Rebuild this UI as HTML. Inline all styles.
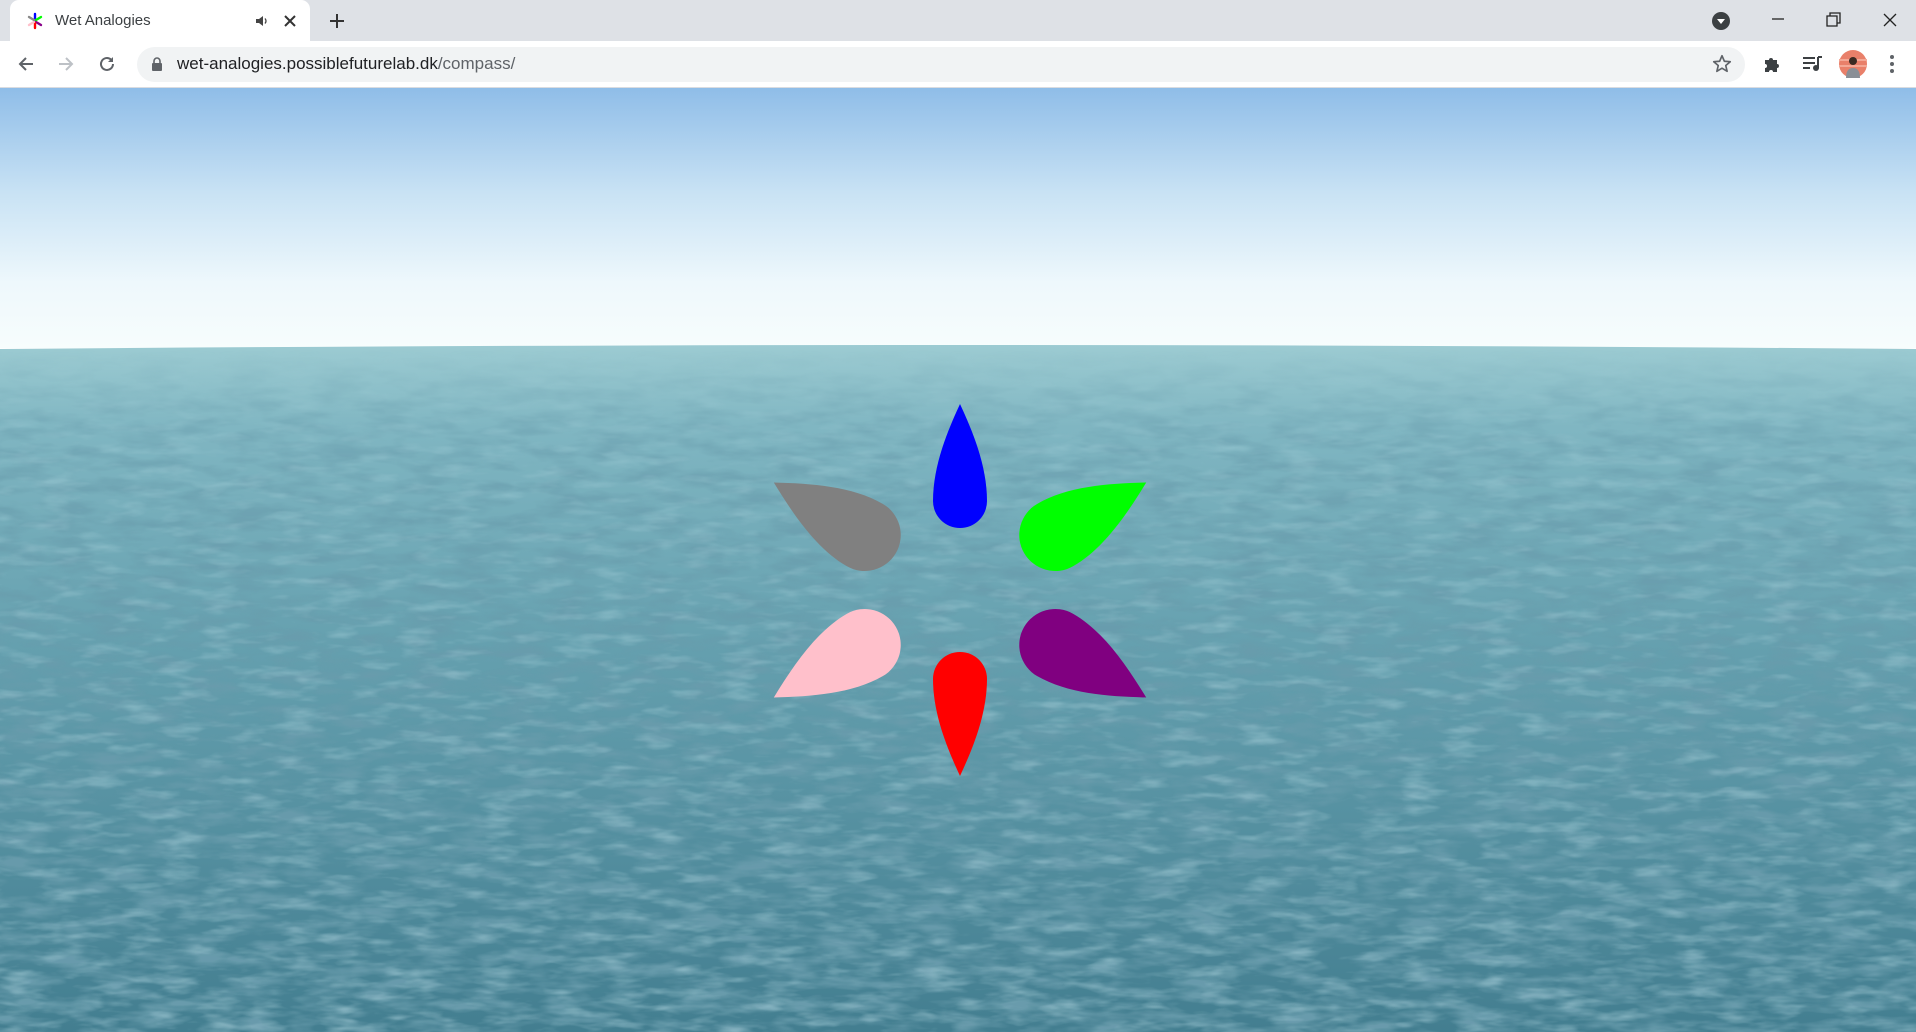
<!DOCTYPE html>
<html><head><meta charset="utf-8"><style>
html,body{margin:0;padding:0;width:1916px;height:1032px;overflow:hidden;font-family:"Liberation Sans",sans-serif;background:#fff}
.tabbar{position:absolute;left:0;top:0;width:1916px;height:41px;background:#dee1e6}
.tab{position:absolute;left:10px;top:0;width:300px;height:41px;background:#fff;border-radius:9px 9px 0 0}
.toolbar{position:absolute;left:0;top:41px;width:1916px;height:46px;background:#fff;border-bottom:1px solid #dadce0}
.omni{position:absolute;left:137px;top:47px;width:1608px;height:35px;background:#f1f3f4;border-radius:18px}
.t{position:absolute;white-space:nowrap}
</style></head><body>
<div class="tabbar"></div>
<div class="tab"></div>
<svg class="t" style="left:26px;top:12px" width="18" height="18" viewBox="0 0 18 18">
<g stroke-width="2.4" stroke-linecap="round"><line x1="9" y1="8" x2="9" y2="2" stroke="#00f"/><line x1="10" y1="8" x2="15" y2="5" stroke="#0f0"/><line x1="10" y1="10" x2="15" y2="13" stroke="#808"/><line x1="9" y1="11" x2="9" y2="16" stroke="#f00"/><line x1="8" y1="10" x2="3" y2="13" stroke="pink"/><line x1="8" y1="8" x2="3" y2="5" stroke="#888"/></g></svg>
<div class="t" style="left:55px;top:12px;font-size:15px;color:#3c4043">Wet Analogies</div>
<svg class="t" style="left:255px;top:14px" width="14" height="14" viewBox="0 0 14 14"><path d="M1 5h3l4-3v10l-4-3H1z" fill="#444"/><path d="M10 4.5q2 2.5 0 5" stroke="#444" fill="none" stroke-width="1.3"/></svg>
<svg class="t" style="left:283px;top:14px" width="14" height="14" viewBox="0 0 14 14"><path d="M2 2L12 12M12 2L2 12" stroke="#333" stroke-width="2"/></svg>
<svg class="t" style="left:328px;top:12px" width="18" height="18" viewBox="0 0 18 18"><path d="M9 2v14M2 9h14" stroke="#333" stroke-width="2"/></svg>
<svg class="t" style="left:1711px;top:11px" width="20" height="20" viewBox="0 0 20 20"><circle cx="10" cy="10" r="9" fill="#3c4043"/><path d="M6 8h8l-4 5z" fill="#fff"/></svg>
<svg class="t" style="left:1770px;top:10px" width="140" height="20" viewBox="0 0 140 20"><path d="M2 9h12" stroke="#222" stroke-width="1.3"/><path d="M57 6h10v10H57zM60 6V3h10v10h-3" stroke="#222" stroke-width="1.3" fill="none"/><path d="M114 4l12 12M126 4L114 16" stroke="#222" stroke-width="1.3"/></svg>
<div class="toolbar"></div>
<div class="omni"></div>
<svg class="t" style="left:16px;top:54px" width="20" height="20" viewBox="0 0 20 20"><path d="M17 10H4M10 4l-6 6 6 6" stroke="#5f6368" stroke-width="2" fill="none"/></svg>
<svg class="t" style="left:56px;top:54px" width="20" height="20" viewBox="0 0 20 20"><path d="M3 10h13M10 4l6 6-6 6" stroke="#bdc1c6" stroke-width="2" fill="none"/></svg>
<svg class="t" style="left:97px;top:54px" width="20" height="20" viewBox="0 0 20 20"><path d="M16 10a6 6 0 1 1-2-4.5" stroke="#5f6368" stroke-width="2" fill="none"/><path d="M16 3v5h-5z" fill="#5f6368"/></svg>
<svg class="t" style="left:151px;top:57px" width="12" height="15" viewBox="0 0 12 15"><rect x="1" y="6" width="10" height="8" rx="1" fill="#5f6368"/><path d="M3 6V4a3 3 0 0 1 6 0v2" stroke="#5f6368" stroke-width="1.6" fill="none"/></svg>
<div class="t" style="left:177px;top:54px;font-size:17px;color:#202124">wet-analogies.possiblefuturelab.dk<span style="color:#5f6368">/compass/</span></div>
<svg class="t" style="left:1711px;top:53px" width="22" height="22" viewBox="0 0 24 24"><path d="M12 3l2.6 6 6.4.5-4.9 4.2 1.5 6.3L12 16.6 6.4 20l1.5-6.3L3 9.5 9.4 9z" stroke="#5f6368" stroke-width="1.8" fill="none" stroke-linejoin="round"/></svg>
<svg class="t" style="left:1762px;top:54px" width="20" height="20" viewBox="0 0 20 20"><path d="M3 6h4a2 2 0 1 1 4 0h4v4a2 2 0 1 1 0 4v4h-4a2 2 0 1 0-4 0H3v-4a2 2 0 1 0 0-4z" fill="#3c4043"/></svg>
<svg class="t" style="left:1802px;top:54px" width="22" height="20" viewBox="0 0 22 20"><path d="M1 4h12M1 9h12M1 14h7" stroke="#3c4043" stroke-width="2"/><path d="M16 3v11" stroke="#3c4043" stroke-width="2"/><circle cx="14" cy="14" r="3" fill="#3c4043"/><path d="M16 3h4" stroke="#3c4043" stroke-width="2"/></svg>
<svg class="t" style="left:1839px;top:50px" width="28" height="28" viewBox="0 0 28 28"><circle cx="14" cy="14" r="14" fill="#e9806a"/><path d="M0 10h28M0 16h28" stroke="#f4a896" stroke-width="2"/><circle cx="14" cy="11" r="4" fill="#3a2a22"/><path d="M7 28q0-10 7-10t7 10z" fill="#8a8f96"/></svg>
<svg class="t" style="left:1889px;top:54px" width="6" height="20" viewBox="0 0 6 20"><circle cx="3" cy="3" r="2" fill="#5f6368"/><circle cx="3" cy="10" r="2" fill="#5f6368"/><circle cx="3" cy="17" r="2" fill="#5f6368"/></svg>

<svg class="t" style="left:0;top:88px" width="1916" height="944" viewBox="0 88 1916 944">
<defs>
<linearGradient id="sky" x1="0" y1="0" x2="0" y2="1"><stop offset="0" stop-color="#8fbde8"/><stop offset="0.4" stop-color="#c8e2f4"/><stop offset="0.75" stop-color="#eef8fc"/><stop offset="1" stop-color="#f7fdfd"/></linearGradient>
<linearGradient id="sea" x1="0" y1="0" x2="0" y2="1"><stop offset="0" stop-color="#9ccbd2"/><stop offset="0.12" stop-color="#80b6c2"/><stop offset="0.45" stop-color="#649fae"/><stop offset="1" stop-color="#437e90"/></linearGradient>
<linearGradient id="fade" x1="0" y1="0" x2="0" y2="1"><stop offset="0" stop-color="#fff" stop-opacity="0"/><stop offset="0.15" stop-color="#fff" stop-opacity="0.5"/><stop offset="0.5" stop-color="#fff" stop-opacity="0.85"/><stop offset="1" stop-color="#fff" stop-opacity="1"/></linearGradient>
<mask id="m"><rect x="0" y="350" width="1916" height="682" fill="url(#fade)"/></mask>
<filter id="dark" x="0" y="0" width="100%" height="100%"><feTurbulence type="fractalNoise" baseFrequency="0.022 0.085" numOctaves="3" seed="3"/><feColorMatrix values="0 0 0 0 0.14  0 0 0 0 0.33  0 0 0 0 0.41  2.8 0 0 0 -1.1"/></filter>
<filter id="light" x="0" y="0" width="100%" height="100%"><feTurbulence type="fractalNoise" baseFrequency="0.025 0.09" numOctaves="3" seed="11"/><feColorMatrix values="0 0 0 0 0.56  0 0 0 0 0.79  0 0 0 0 0.85  2.5 0 0 0 -1.25"/></filter>
</defs>
<rect x="0" y="88" width="1916" height="260" fill="url(#sky)"/>
<path d="M0 349Q958 341 1916 349V1032H0z" fill="url(#sea)"/>
<g mask="url(#m)">
<rect x="0" y="350" width="1916" height="682" filter="url(#dark)" opacity="1"/>
<rect x="0" y="350" width="1916" height="682" filter="url(#light)" opacity="0.4"/>
</g>
<g transform="translate(960 590)">
<path d="M0,-186C12,-160 27,-125 27,-89A27,27 0 0 1 -27,-89C-27,-125 -12,-160 0,-186Z" fill="#0000ff"/>
<path transform="rotate(180)" d="M0,-186C12,-160 27,-125 27,-89A27,27 0 0 1 -27,-89C-27,-125 -12,-160 0,-186Z" fill="#ff0000"/>
<path transform="rotate(60)" d="M0,-215C18,-182 36,-145 36,-110A36,36 0 0 1 -36,-110C-36,-145 -18,-182 0,-215Z" fill="#00ff00"/>
<path transform="rotate(120)" d="M0,-215C18,-182 36,-145 36,-110A36,36 0 0 1 -36,-110C-36,-145 -18,-182 0,-215Z" fill="#800080"/>
<path transform="rotate(240)" d="M0,-215C18,-182 36,-145 36,-110A36,36 0 0 1 -36,-110C-36,-145 -18,-182 0,-215Z" fill="#ffc0cb"/>
<path transform="rotate(300)" d="M0,-215C18,-182 36,-145 36,-110A36,36 0 0 1 -36,-110C-36,-145 -18,-182 0,-215Z" fill="#808080"/>
</g>
</svg>
</body></html>
